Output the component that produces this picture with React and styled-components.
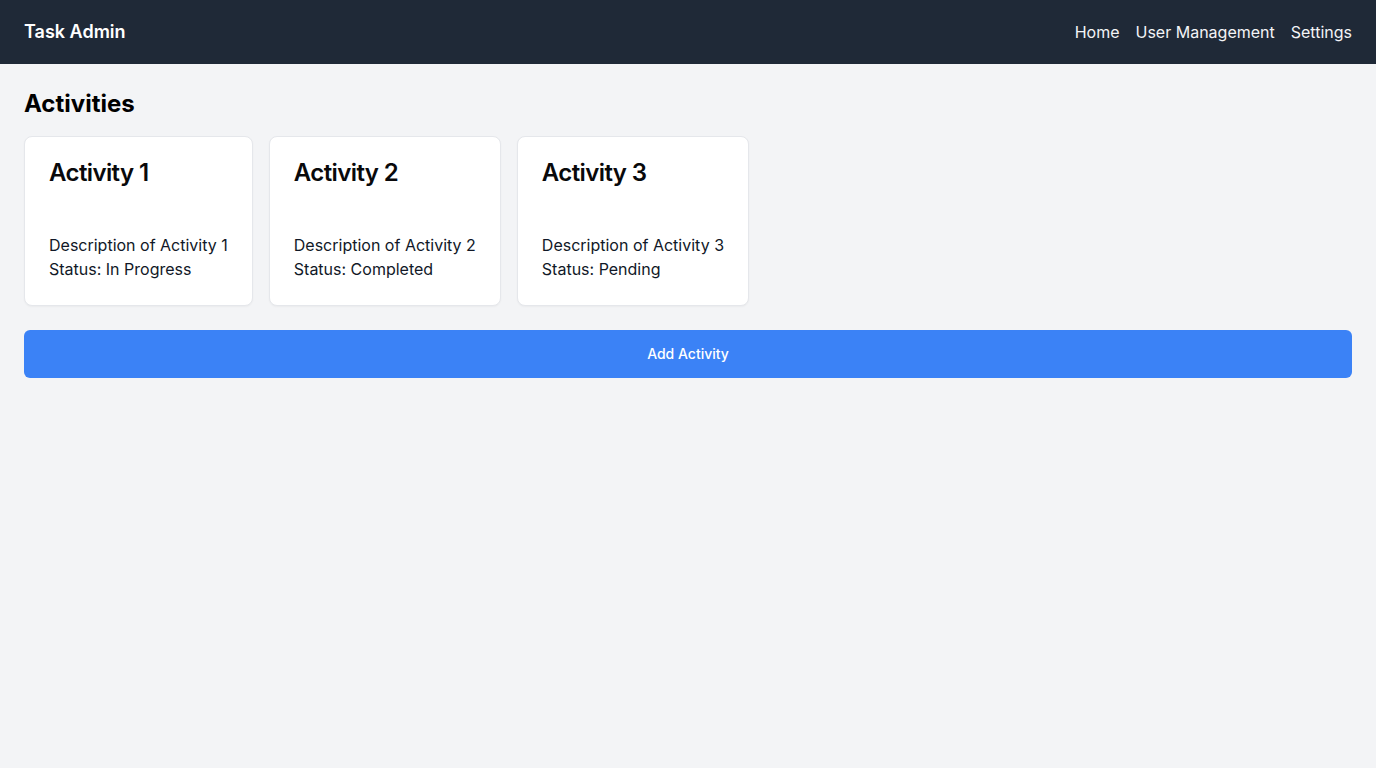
import React from "react";
import styled, { createGlobalStyle } from "styled-components";

const Global = createGlobalStyle`
  * { box-sizing: border-box; }
  html, body { margin: 0; padding: 0; }
  body {
    font-family: Inter, "Noto Sans", sans-serif;
    background: #f3f4f6;
    color: #111827;
  }
`;

const Page = styled.div`
  min-height: 768px;
  background: #f3f4f6;
`;

const NavBar = styled.header`
  height: 64px;
  background: #1f2937;
  display: flex;
  align-items: center;
  justify-content: space-between;
  padding: 0 24px;
`;

const Brand = styled.div`
  color: #ffffff;
  font-size: 18px;
  font-weight: 600;
  line-height: 28px;
`;

const NavLinks = styled.nav`
  display: flex;
  gap: 16px;
`;

const NavLink = styled.a`
  color: #f3f4f6;
  font-size: 16px;
  line-height: 24px;
  text-decoration: none;
  cursor: pointer;
`;

const Main = styled.main`
  padding: 24px;
`;

const Heading = styled.h2`
  margin: 0 0 16px;
  font-size: 24px;
  line-height: 32px;
  font-weight: 700;
  color: #000;
`;

const CardRow = styled.div`
  display: flex;
  gap: 16px;
  align-items: flex-start;
`;

const Card = styled.div`
  background: #ffffff;
  border: 1px solid #e5e7eb;
  border-radius: 8px;
  box-shadow: 0 1px 2px rgba(0, 0, 0, 0.04);
  padding: 24px;
  display: flex;
  flex-direction: column;
`;

const CardTitle = styled.h3`
  margin: 0 0 48px;
  font-size: 24px;
  line-height: 24px;
  font-weight: 600;
  letter-spacing: -0.025em;
  color: #09090b;
`;

const CardText = styled.p`
  margin: 0;
  font-size: 16px;
  line-height: 24px;
  color: #111827;
`;

const AddButton = styled.button`
  margin-top: 24px;
  width: 100%;
  height: 48px;
  padding: 0 0 2px;
  border: none;
  border-radius: 6px;
  background: #3b82f6;
  color: #ffffff;
  font-family: Inter, "Noto Sans", sans-serif;
  font-size: 14px;
  font-weight: 500;
  cursor: pointer;
`;

const activities = [
  { id: 1, status: "In Progress" },
  { id: 2, status: "Completed" },
  { id: 3, status: "Pending" },
];

export default function App() {
  return (
    <Page>
      <Global />
      <NavBar>
        <Brand>Task Admin</Brand>
        <NavLinks>
          <NavLink>Home</NavLink>
          <NavLink>User Management</NavLink>
          <NavLink>Settings</NavLink>
        </NavLinks>
      </NavBar>
      <Main>
        <Heading>Activities</Heading>
        <CardRow>
          {activities.map((a) => (
            <Card key={a.id}>
              <CardTitle>Activity {a.id}</CardTitle>
              <CardText>Description of Activity {a.id}</CardText>
              <CardText>Status: {a.status}</CardText>
            </Card>
          ))}
        </CardRow>
        <AddButton>Add Activity</AddButton>
      </Main>
    </Page>
  );
}
